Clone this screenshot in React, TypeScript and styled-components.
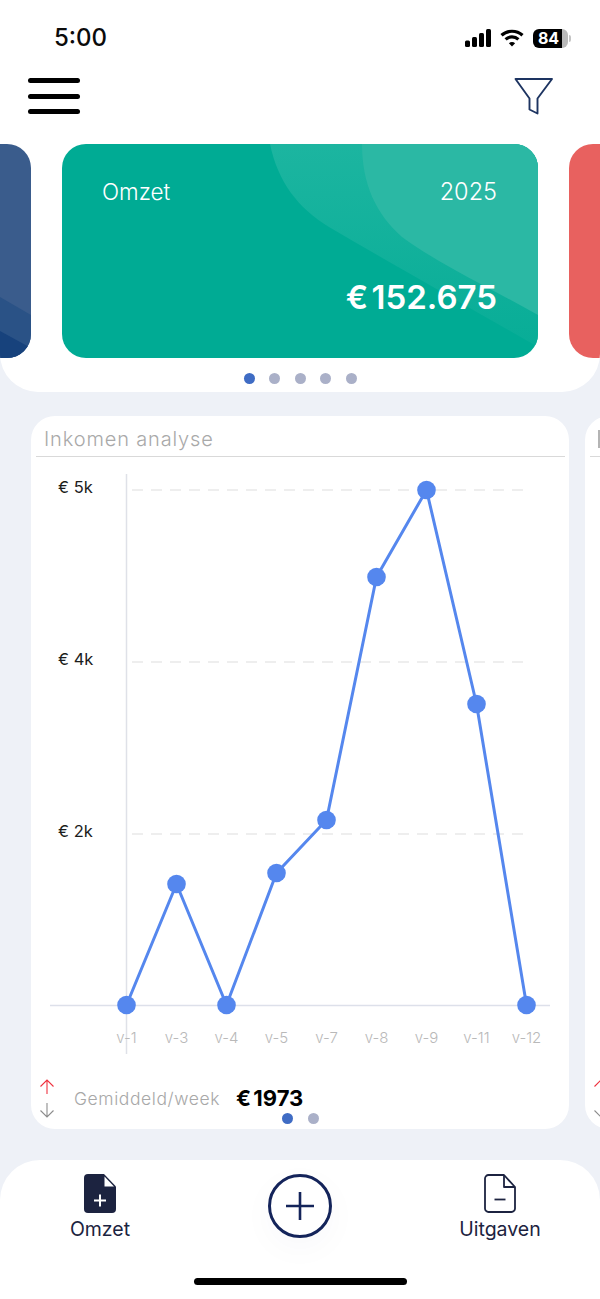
import React from "react";
import styled, { createGlobalStyle } from "styled-components";

const Global = createGlobalStyle`
  html, body { margin: 0; padding: 0; background: #eef1f7; }
  * { box-sizing: border-box; }
`;

const SANS = `"Inter", "Liberation Sans", sans-serif`;

const Page = styled.div`
  width: 600px;
  height: 1299px;
  overflow: hidden;
  display: flex;
  flex-direction: column;
  background: #eef1f7;
  font-family: ${SANS};
`;

const TopPanel = styled.header`
  height: 392px;
  flex-shrink: 0;
  background: #fff;
  border-radius: 0 0 38px 38px;
  overflow: hidden;
`;

const StatusBar = styled.div`
  height: 62px;
  padding: 22px 32px 0 54px;
  display: flex;
  align-items: flex-start;
  justify-content: space-between;
`;

const Clock = styled.span`
  font-size: 24px;
  line-height: 32px;
  font-weight: 500;
  color: #0b0b0b;
`;

const StatusIcons = styled.div`
  display: flex;
  align-items: center;
  gap: 9px;
  height: 32px;
`;

const Battery = styled.div`
  width: 35px;
  height: 19px;
  border-radius: 6px;
  background: linear-gradient(90deg, #000 0 84%, #b9b9b9 84% 100%);
  color: #fff;
  font-size: 16px;
  font-weight: 700;
  line-height: 19px;
  text-align: center;
  padding-right: 4px;
  position: relative;
  &::after {
    content: "";
    position: absolute;
    right: -3px;
    top: 6px;
    width: 2px;
    height: 7px;
    border-radius: 0 2px 2px 0;
    background: #c4c4c4;
  }
`;

const Header = styled.div`
  height: 82px;
  padding: 0 47px 0 28px;
  display: flex;
  justify-content: space-between;
  align-items: flex-start;
`;

const Burger = styled.div`
  width: 52px;
  margin-top: 16px;
  display: flex;
  flex-direction: column;
  gap: 10.5px;
`;

const BurgerBar = styled.span`
  display: block;
  height: 5px;
  border-radius: 3px;
  background: #000;
`;

const FilterIcon = styled.svg`
  width: 40px;
  height: 38px;
  margin-top: 15px;
`;

const CardTrack = styled.div`
  display: flex;
  justify-content: center;
  gap: 31px;
`;

const BalanceCard = styled.div<{ $bg: string }>`
  position: relative;
  flex: 0 0 476px;
  height: 214px;
  border-radius: 24px;
  overflow: hidden;
  background: ${(p) => p.$bg};
  color: #fff;
  padding: 34px 41px 0 40px;
  display: flex;
  flex-direction: column;
`;

const CardArt = styled.svg`
  position: absolute;
  inset: 0;
  width: 476px;
  height: 214px;
`;

const CardRow = styled.div`
  position: relative;
  display: flex;
  justify-content: space-between;
  align-items: baseline;
  font-size: 22.5px;
  line-height: 28px;
  font-weight: 300;
`;

const CardYear = styled.span`
  font-size: 23.5px;
`;

const CardValue = styled.div`
  position: relative;
  margin-top: 71px;
  text-align: right;
  font-size: 33px;
  line-height: 40px;
  font-weight: 600;
  word-spacing: -5px;
`;

const Dots = styled.div<{ $gap: number }>`
  display: flex;
  justify-content: center;
  gap: ${(p) => p.$gap}px;
`;

const TopDots = styled(Dots)`
  margin-top: 15px;
`;

const Dot = styled.span<{ $on?: boolean }>`
  width: 11px;
  height: 11px;
  border-radius: 50%;
  background: ${(p) => (p.$on ? "#3f6cc4" : "#aab0c8")};
`;

const ChartTrack = styled.div`
  margin-top: 24px;
  padding-left: 31px;
  display: flex;
  gap: 16px;
  flex-shrink: 0;
`;

const ChartCard = styled.section`
  flex: 0 0 538px;
  height: 713px;
  background: #fff;
  border-radius: 24px;
  overflow: hidden;
  display: flex;
  flex-direction: column;
`;

const ChartTitle = styled.h2`
  margin: 0 4px 0 5px;
  height: 41px;
  padding: 8px 0 0 8px;
  border-bottom: 1px solid #d9d9d9;
  font-size: 20px;
  line-height: 30px;
  font-weight: 300;
  color: #a9a9a9;
  letter-spacing: 0.85px;
  white-space: nowrap;
`;

const SideStub = styled.span`
  display: block;
  width: 4px;
  height: 18px;
  margin: 0;
  background: #b4b4b4;
`;

const SideHead = styled.div`
  margin: 0 4px 0 5px;
  height: 41px;
  padding: 14px 0 0 8px;
  border-bottom: 1px solid #d9d9d9;
`;

const ChartSvg = styled.svg`
  display: block;
  width: 538px;
  height: 603px;
  flex-shrink: 0;
  font-family: ${SANS};
`;

const SideSpacer = styled.div`
  height: 603px;
  flex-shrink: 0;
`;

const YLabel = styled.text`
  font-size: 16.5px;
  fill: #1c1c1c;
`;

const XLabel = styled.text`
  font-size: 15px;
  font-weight: 300;
  fill: #b9b9b9;
  text-anchor: middle;
`;

const Summary = styled.div`
  height: 40px;
  margin-top: 18px;
  padding-left: 8px;
  display: flex;
  align-items: center;
`;

const Trend = styled.div`
  width: 16px;
  display: flex;
  flex-direction: column;
  gap: 7px;
`;

const SummaryLabel = styled.span`
  margin-left: 19px;
  font-size: 17.5px;
  font-weight: 300;
  color: #a8a8a8;
  white-space: nowrap;
  letter-spacing: 0.58px;
`;

const SummaryValue = styled.span`
  margin-left: 16px;
  font-size: 22px;
  font-weight: 700;
  color: #000;
  word-spacing: -3px;
  white-space: nowrap;
`;

const CardDots = styled(Dots)`
  margin-top: -5px;
`;

const BottomNav = styled.nav`
  margin-top: 31px;
  flex: 1;
  background: #fff;
  border-radius: 40px 40px 0 0;
  padding-top: 14px;
  display: flex;
  flex-direction: column;
`;

const NavGrid = styled.div`
  display: grid;
  grid-template-columns: repeat(3, 1fr);
`;

const NavItem = styled.div`
  display: flex;
  flex-direction: column;
  align-items: center;
  gap: 2px;
  font-size: 19.5px;
  line-height: 28px;
  color: #1c2340;
`;

const AddButton = styled.div`
  justify-self: center;
  width: 64px;
  height: 64px;
  border-radius: 50%;
  border: 3px solid #14245a;
  display: flex;
  align-items: center;
  justify-content: center;
  box-shadow: 0 10px 34px rgba(20, 36, 90, 0.03);
`;

const HomeBar = styled.div`
  align-self: center;
  width: 213px;
  height: 7px;
  border-radius: 4px;
  background: #000;
  margin-top: auto;
  margin-bottom: 14px;
`;

const TrendArrows = () => (
  <Trend>
    <svg width="16" height="16" viewBox="0 0 16 16" fill="none" stroke="#ef3340" strokeWidth="1.1">
      <path d="M8 15V1M1.5 7.5 8 1l6.5 6.5" />
    </svg>
    <svg width="16" height="16" viewBox="0 0 16 16" fill="none" stroke="#8d8d8d" strokeWidth="1.1">
      <path d="M8 1v14M1.5 8.5 8 15l6.5-6.5" />
    </svg>
  </Trend>
);

const xs = [126.5, 176.5, 226.5, 276.5, 326.5, 376.5, 426.5, 476.5, 526.5];
const ys = [1005, 884, 1005, 873, 820, 577, 490, 704, 1005];
const weeks = ["v-1", "v-3", "v-4", "v-5", "v-7", "v-8", "v-9", "v-11", "v-12"];

const Chart = () => (
  <ChartSvg viewBox="31 457 538 603">
    <line x1="126.5" y1="474" x2="126.5" y2="1054" stroke="#dfe1e8" strokeWidth="1.5" />
    <line x1="50" y1="1005.5" x2="550" y2="1005.5" stroke="#dde0ea" strokeWidth="1.3" />
    {[490, 662, 834].map((y) => (
      <line key={y} x1="127" y1={y} x2="523" y2={y} stroke="#dedede" strokeWidth="1.2" strokeDasharray="11 8" strokeDashoffset="-5" />
    ))}
    <YLabel x="58" y="493">€ 5k</YLabel>
    <YLabel x="58" y="665">€ 4k</YLabel>
    <YLabel x="58" y="837">€ 2k</YLabel>
    {weeks.map((w, i) => (
      <XLabel key={w} x={xs[i]} y="1043">{w}</XLabel>
    ))}
    <polyline
      points={xs.map((x, i) => `${x},${ys[i]}`).join(" ")}
      fill="none"
      stroke="#5587ee"
      strokeWidth="3"
      strokeLinejoin="round"
    />
    {xs.map((x, i) => (
      <circle key={x} cx={x} cy={ys[i]} r="9.3" fill="#5587ee" />
    ))}
  </ChartSvg>
);

export default function App() {
  return (
    <Page>
      <Global />
      <TopPanel>
        <StatusBar>
          <Clock>5:00</Clock>
          <StatusIcons>
            <svg width="26" height="18" viewBox="0 0 26 18" fill="#000">
              <rect x="0" y="11.5" width="5" height="6.5" rx="1.5" />
              <rect x="7" y="8" width="5" height="10" rx="1.5" />
              <rect x="14" y="4" width="5" height="14" rx="1.5" />
              <rect x="21" y="0" width="5" height="18" rx="1.5" />
            </svg>
            <svg width="24" height="18" viewBox="0 0 24 18" fill="none" stroke="#000" strokeWidth="3.2">
              <path d="M1.5 6.3C7.4.9 16.6.9 22.5 6.3" />
              <path d="M5.6 10.4c3.6-3.3 9.2-3.3 12.8 0" />
              <path d="M12 17.5 8.9 14.2c1.8-1.5 4.4-1.5 6.2 0z" fill="#000" stroke="none" />
            </svg>
            <Battery>84</Battery>
          </StatusIcons>
        </StatusBar>
        <Header>
          <Burger>
            <BurgerBar />
            <BurgerBar />
            <BurgerBar />
          </Burger>
          <FilterIcon viewBox="0 0 40 38" fill="none" stroke="#1d3461" strokeWidth="1.9">
            <path d="M2.5 2H39L24.5 21.5V36.5L16.5 32.5V21.5Z" strokeLinejoin="round" />
          </FilterIcon>
        </Header>
        <CardTrack>
          <BalanceCard $bg="#3a5c8c">
            <CardArt viewBox="0 0 476 214">
              <path d="M445 153 L476 171 V214 H445Z" fill="#2a5286" />
              <path d="M445 187 L476 204 V214 H445Z" fill="#17427c" />
            </CardArt>
          </BalanceCard>
          <BalanceCard $bg="#00ab94">
            <CardArt viewBox="0 0 476 214">
              <defs>
                <linearGradient id="tealFade" x1="0" y1="0" x2="0" y2="1">
                  <stop offset="0" stopColor="#1cb5a0" />
                  <stop offset="1" stopColor="#08ad97" />
                </linearGradient>
              </defs>
              <path d="M208 0C216 38 236 64 267 83C330 120 410 165 476 203V0Z" fill="url(#tealFade)" />
              <path d="M300 0C300 40 314 70 340 93C380 122 430 145 476 171V0Z" fill="#2bb8a4" />
            </CardArt>
            <CardRow>
              <span>Omzet</span>
              <CardYear>2025</CardYear>
            </CardRow>
            <CardValue>€ 152.675</CardValue>
          </BalanceCard>
          <BalanceCard $bg="#e8615f" />
        </CardTrack>
        <TopDots $gap={14.5}>
          <Dot $on />
          <Dot />
          <Dot />
          <Dot />
          <Dot />
        </TopDots>
      </TopPanel>
      <ChartTrack>
        <ChartCard>
          <ChartTitle>Inkomen analyse</ChartTitle>
          <Chart />
          <Summary>
            <TrendArrows />
            <SummaryLabel>Gemiddeld/week</SummaryLabel>
            <SummaryValue>€ 1973</SummaryValue>
          </Summary>
          <CardDots $gap={15}>
            <Dot $on />
            <Dot />
          </CardDots>
        </ChartCard>
        <ChartCard>
          <SideHead>
            <SideStub />
          </SideHead>
          <SideSpacer />
          <Summary>
            <TrendArrows />
          </Summary>
        </ChartCard>
      </ChartTrack>
      <BottomNav>
        <NavGrid>
          <NavItem>
            <svg width="32" height="39" viewBox="0 0 32 39">
              <path d="M4 0H20L32 12.5V35a4 4 0 0 1-4 4H4a4 4 0 0 1-4-4V4a4 4 0 0 1 4-4Z" fill="#1c2340" />
              <path d="M20.5 2.5L30 12.5H20.5Z" fill="#fff" />
              <path d="M16 20.5v12M10 26.5h12" stroke="#fff" strokeWidth="2" />
            </svg>
            Omzet
          </NavItem>
          <AddButton>
            <svg width="30" height="30" viewBox="0 0 30 30" stroke="#14245a" strokeWidth="2.6">
              <path d="M15 1v28M1 15h28" />
            </svg>
          </AddButton>
          <NavItem>
            <svg width="32" height="39" viewBox="0 0 32 39" fill="none" stroke="#1c2340" strokeWidth="1.8">
              <path d="M4.5 1H20L31 13V34.5a3.5 3.5 0 0 1-3.5 3.5H4.5A3.5 3.5 0 0 1 1 34.5V4.5A3.5 3.5 0 0 1 4.5 1Z" strokeLinejoin="round" />
              <path d="M20 1V13H31" strokeLinejoin="round" />
              <path d="M10.5 25.5h11" />
            </svg>
            Uitgaven
          </NavItem>
        </NavGrid>
        <HomeBar />
      </BottomNav>
    </Page>
  );
}
